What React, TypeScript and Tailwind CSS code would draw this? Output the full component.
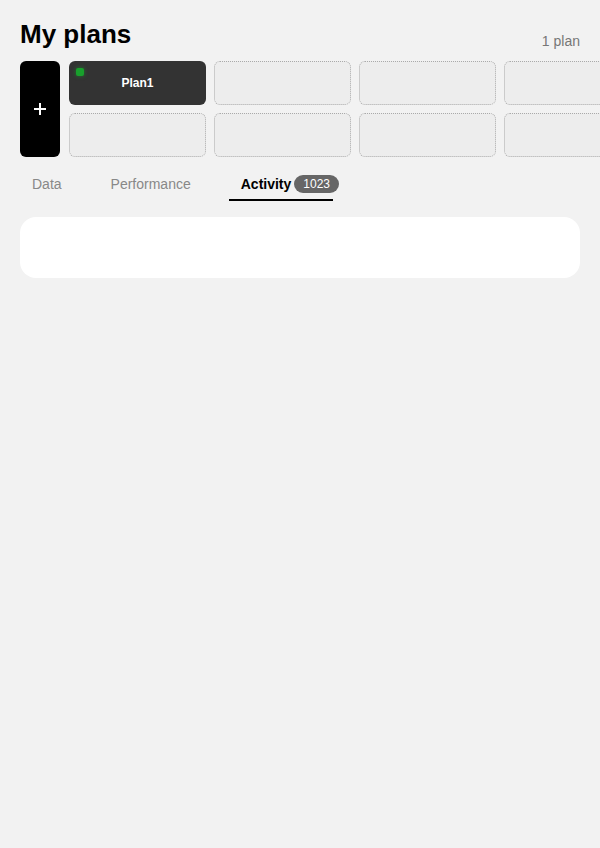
import { FC } from "react";

const Slot: FC<{ name?: string; active?: boolean }> = ({ name, active }) => {
    if (name) {
        return (
            <div className="relative flex h-[44px] w-[137px] shrink-0 items-center justify-center rounded-md bg-[#333333]">
                {active && (
                    <span className="absolute left-[7px] top-[7px] h-[8px] w-[8px] rounded-[2px] bg-[#18a02c] shadow-[0_0_4px_rgba(24,160,44,0.6)]" />
                )}
                <span className="text-[12px] font-bold text-white">{name}</span>
            </div>
        );
    }
    return (
        <div className="h-[44px] w-[137px] shrink-0 rounded-md border border-dotted border-[#aaaaaa] bg-[#ededed]" />
    );
};

const tabs = [
    { label: "Data", cls: "" },
    { label: "Performance", cls: "ml-[25px]" },
];

const App: FC = () => {
    return (
        <div className="min-h-[848px] w-full overflow-hidden bg-[#f2f2f2] font-['Liberation_Sans',Arial,sans-serif]">
            <div className="mt-[19px] flex h-[30px] items-start justify-between px-5">
                <h1 className="text-[26px] font-bold leading-[30px] text-black">My plans</h1>
                <span className="mt-[12px] text-[14px] leading-[20px] text-[#777777]">1 plan</span>
            </div>

            <div className="mt-3 flex pl-5">
                <button className="flex h-[96px] w-[40px] shrink-0 items-center justify-center rounded-md bg-black">
                    <svg width="12" height="12" viewBox="0 0 12 12">
                        <path d="M6 0v12M0 6h12" stroke="white" strokeWidth="2" />
                    </svg>
                </button>
                <div className="ml-[9px] flex flex-col gap-2">
                    <div className="flex gap-2">
                        <Slot name="Plan1" active />
                        <Slot />
                        <Slot />
                        <Slot />
                    </div>
                    <div className="flex gap-2">
                        <Slot />
                        <Slot />
                        <Slot />
                        <Slot />
                    </div>
                </div>
            </div>

            <div className="mt-[17px] flex pl-5">
                {tabs.map((t) => (
                    <div
                        key={t.label}
                        className={`px-3 pb-[5px] text-[14px] leading-[20px] text-[#888888] ${t.cls}`}
                    >
                        {t.label}
                    </div>
                ))}
                <div className="ml-[26px] flex w-[104px] items-center whitespace-nowrap border-b-2 border-black pb-[5px] pl-3">
                    <span className="text-[14px] font-bold leading-[20px] text-black">Activity</span>
                    <span className="ml-[3px] flex h-[18px] items-center rounded-full bg-[#666666] px-[9px] text-[12px] leading-none text-white">
                        1023
                    </span>
                </div>
            </div>

            <div className="mx-5 mt-4 h-[61px] rounded-2xl bg-white" />
        </div>
    );
};

export default App;
